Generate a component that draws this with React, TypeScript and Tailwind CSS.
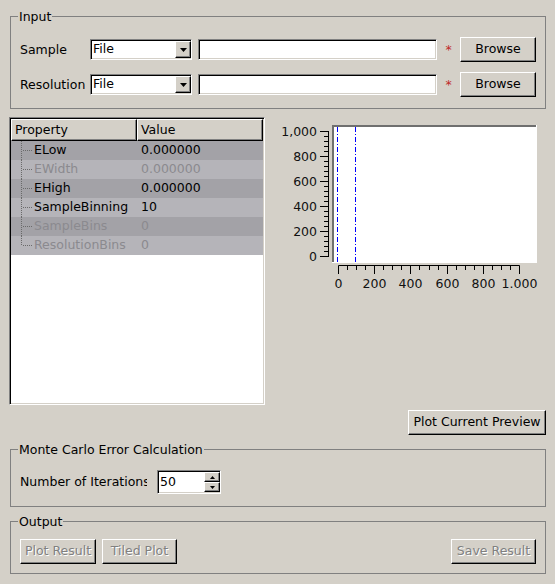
import React from "react";

const sunken =
  "border border-t-[#808080] border-l-[#808080] border-b-white border-r-white shadow-[inset_1px_1px_0_#000,inset_-1px_-1px_0_#d4d0c8]";
const raised =
  "border border-t-white border-l-white border-b-black border-r-black shadow-[inset_-1px_-1px_0_#808080]";

function Button({
  children,
  className = "",
  disabled = false,
}: {
  children: React.ReactNode;
  className?: string;
  disabled?: boolean;
}) {
  return (
    <div
      className={`bg-[#d4d0c8] flex items-center justify-center whitespace-nowrap ${raised} ${
        disabled ? "text-[#808080] [text-shadow:1px_1px_0_#ffffff]" : "text-black"
      } ${className}`}
    >
      {children}
    </div>
  );
}

function Combo() {
  return (
    <div className={`w-[102px] h-[21px] bg-white flex items-center ${sunken}`}>
      <span className="flex-1 pl-[2px] leading-none">File</span>
      <div
        className={`w-[16px] h-[17px] bg-[#d4d0c8] flex items-center justify-center ${raised}`}
      >
        <svg width="7" height="4" viewBox="0 0 7 4">
          <polygon points="0,0 7,0 3.5,4" fill="#000" />
        </svg>
      </div>
    </div>
  );
}

function FileRow({ label }: { label: string }) {
  return (
    <div className="flex items-center h-[25px]">
      <span className="w-[70px] translate-y-[1px]">{label}</span>
      <Combo />
      <div className={`ml-[6px] w-[239px] h-[21px] bg-white ${sunken}`} />
      <span className="w-[23px] text-center text-[#c02a2a] translate-y-[1px]">*</span>
      <Button className="w-[76px] h-[25px]">Browse</Button>
    </div>
  );
}

const rows = [
  { name: "ELow", value: "0.000000", dark: true, disabled: false },
  { name: "EWidth", value: "0.000000", dark: false, disabled: true },
  { name: "EHigh", value: "0.000000", dark: true, disabled: false },
  { name: "SampleBinning", value: "10", dark: false, disabled: false },
  { name: "SampleBins", value: "0", dark: true, disabled: true },
  { name: "ResolutionBins", value: "0", dark: false, disabled: true },
];

function Table() {
  return (
    <div className={`w-[256px] h-[288px] bg-white flex flex-col p-[1px] ${sunken}`}>
      <div className="flex h-[22px] shrink-0">
        <div className={`w-[126px] bg-[#d4d0c8] flex items-center pl-[3px] ${raised}`}>
          Property
        </div>
        <div className={`flex-1 bg-[#d4d0c8] flex items-center pl-[3px] ${raised}`}>
          Value
        </div>
      </div>
      {rows.map((r, i) => {
        const last = i === rows.length - 1;
        return (
          <div
            key={r.name}
            className={`flex h-[19px] shrink-0 items-center ${
              r.dark ? "bg-[#a3a2a7]" : "bg-[#b5b4b9]"
            } ${r.disabled ? "text-[#8b8a8f]" : "text-black"}`}
          >
            <div className="w-[126px] flex items-center h-full">
              <svg width="23" height="19" className="shrink-0">
                <line
                  x1="10.5"
                  y1="0"
                  x2="10.5"
                  y2={last ? 10 : 19}
                  stroke="#6a6a6a"
                  strokeDasharray="1 1"
                />
                <line
                  x1="12"
                  y1="9.5"
                  x2="21"
                  y2="9.5"
                  stroke="#6a6a6a"
                  strokeDasharray="1 1"
                />
              </svg>
              <span>{r.name}</span>
            </div>
            <div className="flex-1 pl-[4px]">{r.value}</div>
          </div>
        );
      })}
    </div>
  );
}

function Chart() {
  const yLabels = ["1,000", "800", "600", "400", "200", "0"];
  const xLabels = ["0", "200", "400", "600", "800", "1.000"];
  const x0 = 67.7;
  const dx = 36.32;
  const yMinor: number[] = [];
  for (let j = 0; j <= 25; j++) if (j % 5 !== 0) yMinor.push(14.5 + 5 * j);
  const xMinor: number[] = [];
  for (let j = 0; j <= 20; j++) if (j % 4 !== 0) xMinor.push(Math.round(x0 + (dx * j) / 4) + 0.5);
  const xMajor = [0, 1, 2, 3, 4, 5].map((k) => Math.round(x0 + dx * k) + 0.5);
  return (
    <svg width="275" height="180" className="ml-[5px] shrink-0" style={{ fontFamily: "'DejaVu Sans', sans-serif" }}>
      <rect x="62" y="8" width="205" height="138" fill="#fff" />
      <rect x="62" y="8" width="204" height="2" fill="#6f6f6f" />
      <rect x="62" y="8" width="2" height="137" fill="#6f6f6f" />
      <line x1="67.5" y1="10" x2="67.5" y2="145" stroke="#0000ff" strokeDasharray="5 2 1 2" />
      <line x1="85.5" y1="10" x2="85.5" y2="145" stroke="#0000ff" strokeDasharray="5 2 1 2" />
      <line x1="58.5" y1="14" x2="58.5" y2="140" stroke="#000" />
      {yLabels.map((l, k) => (
        <g key={l}>
          <line x1="50" y1={14.5 + 25 * k} x2="58.5" y2={14.5 + 25 * k} stroke="#000" />
          <text x="47" y={14.5 + 25 * k + 4.5} textAnchor="end" fontSize="12.5" fill="#111">
            {l}
          </text>
        </g>
      ))}
      {yMinor.map((y) => (
        <line key={y} x1="54" y1={y} x2="58.5" y2={y} stroke="#000" />
      ))}
      <line x1={xMajor[0]} y1="148.5" x2={xMajor[5]} y2="148.5" stroke="#000" />
      {xMajor.map((x, k) => (
        <g key={k}>
          <line x1={x} y1="148.5" x2={x} y2="157" stroke="#000" />
          <text x={x} y="170.5" textAnchor="middle" fontSize="12.5" fill="#111">
            {xLabels[k]}
          </text>
        </g>
      ))}
      {xMinor.map((x) => (
        <line key={x} x1={x} y1="148.5" x2={x} y2="153" stroke="#000" />
      ))}
    </svg>
  );
}

function SpinBtn({ up }: { up?: boolean }) {
  return (
    <div className={`w-[16px] h-[10px] bg-[#d4d0c8] flex items-center justify-center ${raised}`}>
      <svg width="5" height="3" viewBox="0 0 5 3">
        <polygon points={up ? "0,3 5,3 2.5,0" : "0,0 5,0 2.5,3"} fill="#000" />
      </svg>
    </div>
  );
}

export default function App() {
  return (
    <div className="w-[555px] h-[584px] bg-[#d4d0c8] font-['DejaVu_Sans',sans-serif] text-[12.5px] text-black overflow-hidden flex flex-col">
      <fieldset className="mt-[9px] ml-[10px] w-[536px] border border-[#808080] px-[9px] pb-[11px]">
        <legend className="ml-[-2px] px-[1px] leading-[15px]">Input</legend>
        <div className="mt-[13px] flex flex-col gap-[10px]">
          <FileRow label="Sample" />
          <FileRow label="Resolution" />
        </div>
      </fieldset>

      <div className="mt-[8px] flex h-[288px] pl-[9px]">
        <Table />
        <Chart />
      </div>

      <div className="mt-[5px] flex justify-end pr-[9px]">
        <Button className="w-[138px] h-[25px]">Plot Current Preview</Button>
      </div>

      <fieldset className="mt-[7px] ml-[10px] w-[536px] border border-[#808080] px-[9px] pb-[12px]">
        <legend className="ml-[-2px] px-[1px] leading-[15px]">Monte Carlo Error Calculation</legend>
        <div className="mt-[13px] flex items-center h-[24px]">
          <span className="w-[127px] overflow-hidden whitespace-nowrap">Number of Iterations</span>
          <div className={`ml-[10px] w-[64px] h-[24px] bg-white flex items-center ${sunken}`}>
            <span className="flex-1 pl-[2px]">50</span>
            <div className="flex flex-col">
              <SpinBtn up />
              <SpinBtn />
            </div>
          </div>
        </div>
      </fieldset>

      <fieldset className="mt-[7px] ml-[10px] w-[536px] border border-[#808080] px-[9px] pb-[9px]">
        <legend className="ml-[-2px] px-[1px] leading-[15px]">Output</legend>
        <div className="mt-[10px] flex items-center h-[25px]">
          <Button disabled className="w-[76px] h-[25px]">
            Plot Result
          </Button>
          <Button disabled className="ml-[6px] w-[75px] h-[25px]">
            Tiled Plot
          </Button>
          <Button disabled className="ml-auto w-[85px] h-[25px]">
            Save Result
          </Button>
        </div>
      </fieldset>
    </div>
  );
}
